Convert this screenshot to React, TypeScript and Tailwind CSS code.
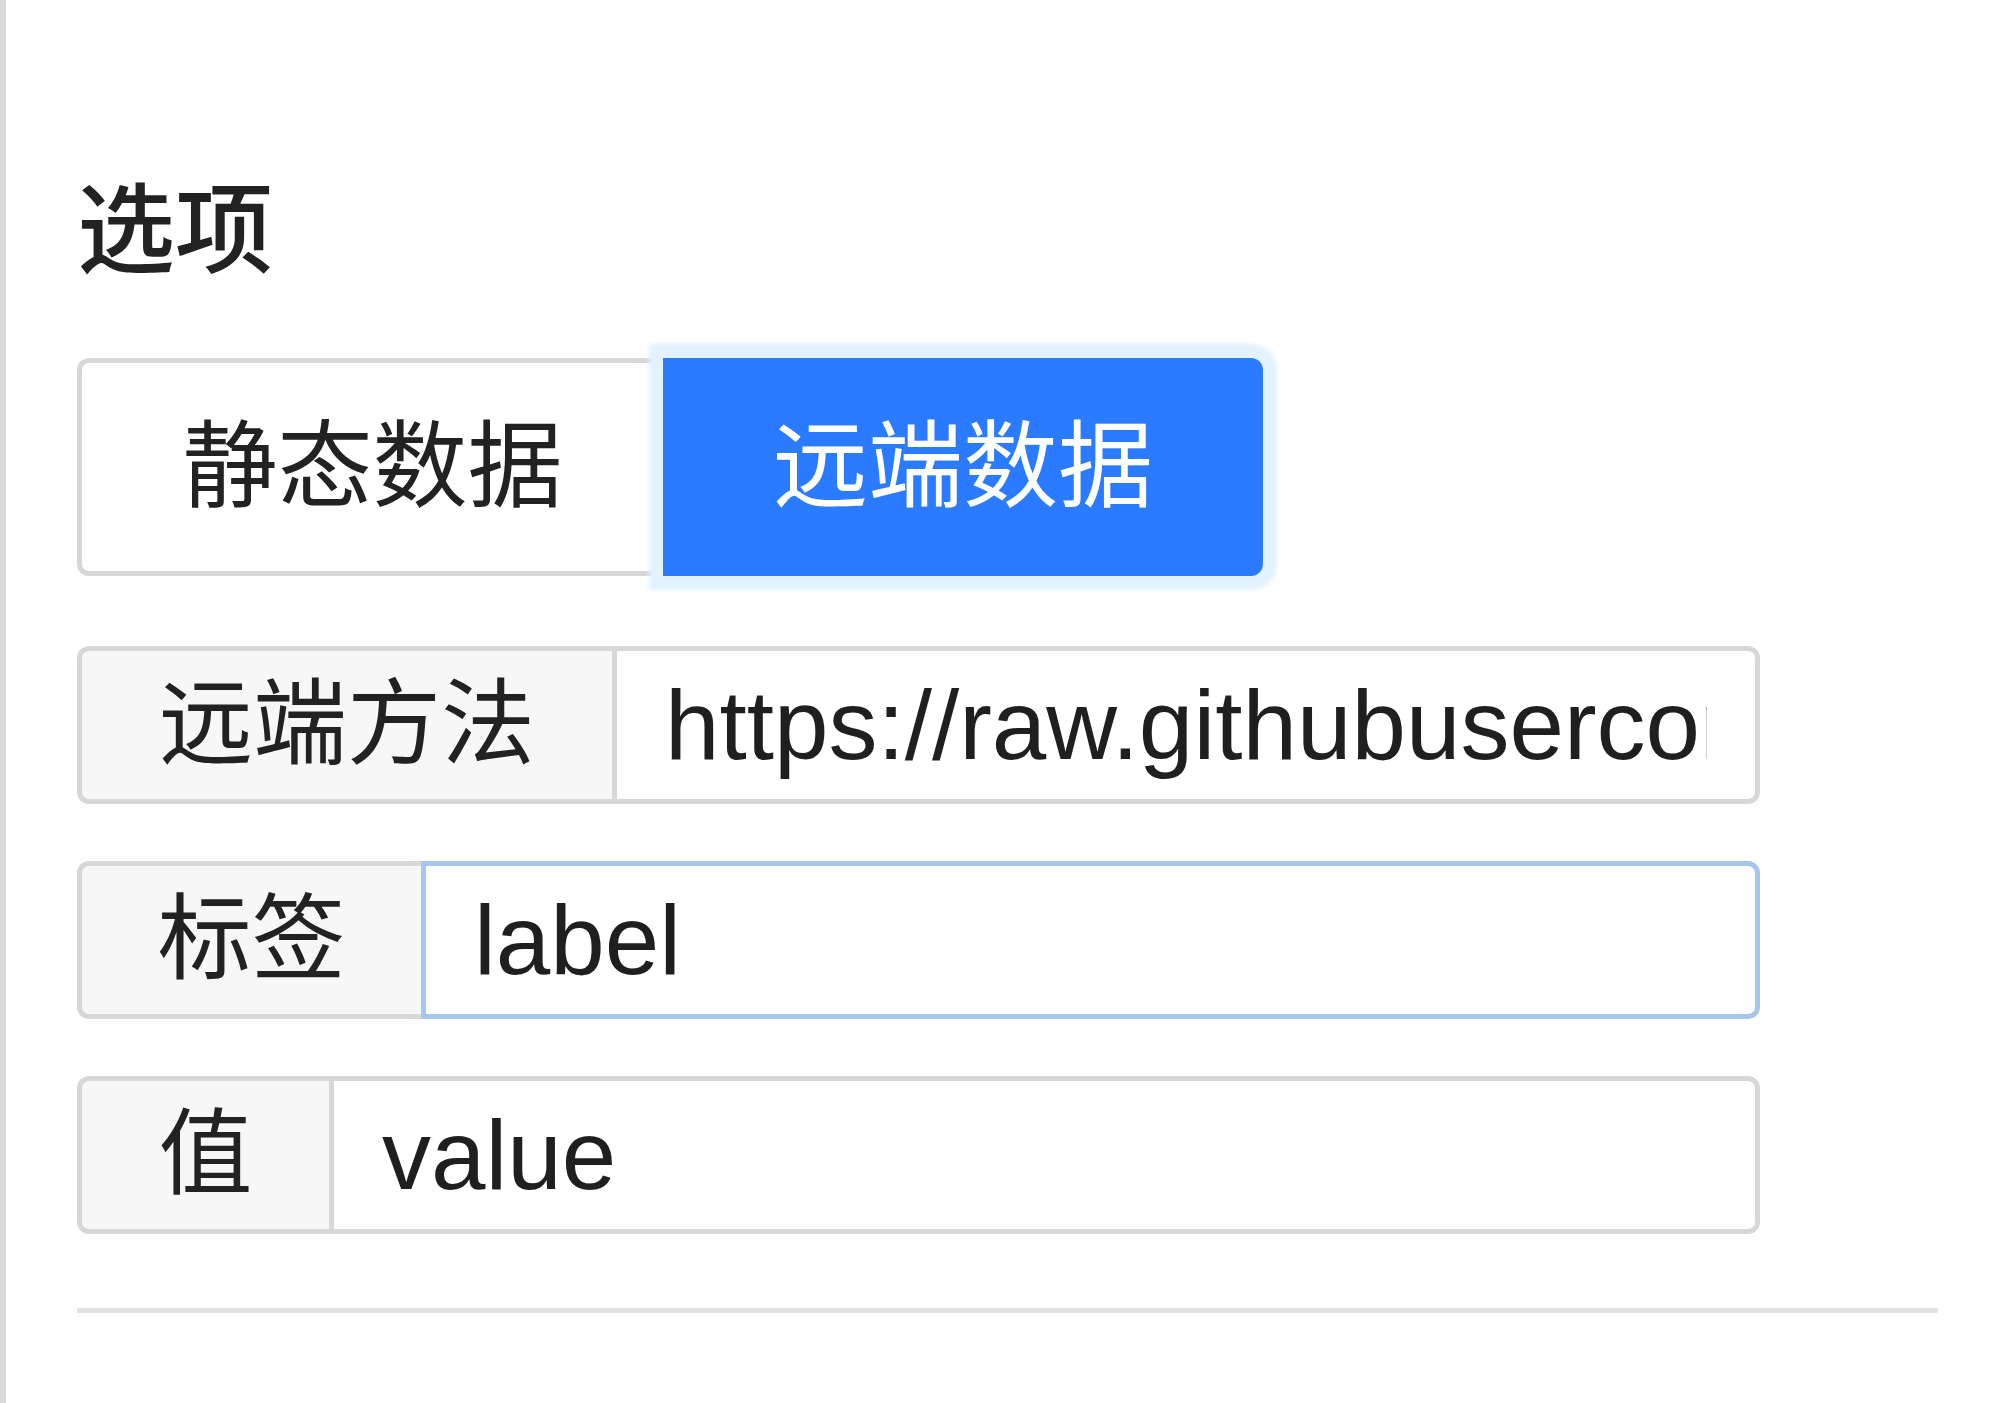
import React from 'react';

const font = { fontFamily: '"Liberation Sans", "Noto Sans CJK SC", sans-serif' };

const rows = [
  { label: '远端方法', value: 'https://raw.githubusercontent.com/baidu/amis/master/examples/static/options.json', width: 'w-[535px]', focused: false },
  { label: '标签', value: 'label', width: 'w-[344px]', focused: true },
  { label: '值', value: 'value', width: 'w-[252px]', focused: false },
];

export default function App() {
  return (
    <div className="w-[2000px] h-[1403px] bg-white border-l-[6px] border-[#d9d9d9] text-[#222]" style={font}>
      <div className="pl-[71px] pr-[62px] pt-[182px]">
        {/* Title */}
        <h2 className="text-[98px] leading-none font-medium">选项</h2>

        {/* Source switch */}
        <div className="flex mt-[78px] h-[218px]">
          <button className="w-[586px] h-full border-[5px] border-r-0 border-[#d7d7d7] rounded-l-[12px] bg-white text-[95px] leading-none text-[#222]">
            静态数据
          </button>
          <button className="w-[600px] h-full rounded-r-[12px] bg-[#2a7bff] text-white text-[95px] leading-none shadow-[0_0_4px_14px_#e2f2ff]">
            远端数据
          </button>
        </div>

        {/* Remote fields */}
        <div className="flex flex-col gap-[57px] mt-[70px]">
          {rows.map((row) => (
            <div key={row.label} className="flex w-[1683px] h-[158px]">
              <div
                className={`${row.width} shrink-0 flex items-center justify-center bg-[#f7f7f7] border-[5px] border-r-0 border-[#d7d7d7] rounded-l-[12px] text-[94px] leading-none text-[#222]`}
              >
                {row.label}
              </div>
              <input
                readOnly
                value={row.value}
                className={`flex-1 min-w-0 h-full px-[48px] bg-white border-[5px] rounded-r-[12px] outline-none text-[98px] text-[#1f1f1f] ${
                  row.focused ? 'border-[#a6c6ec]' : 'border-[#d7d7d7]'
                }`}
                style={font}
              />
            </div>
          ))}
        </div>

        {/* Divider */}
        <div className="mt-[74px] h-[5px] bg-[#e2e2e2]" />
      </div>
    </div>
  );
}
